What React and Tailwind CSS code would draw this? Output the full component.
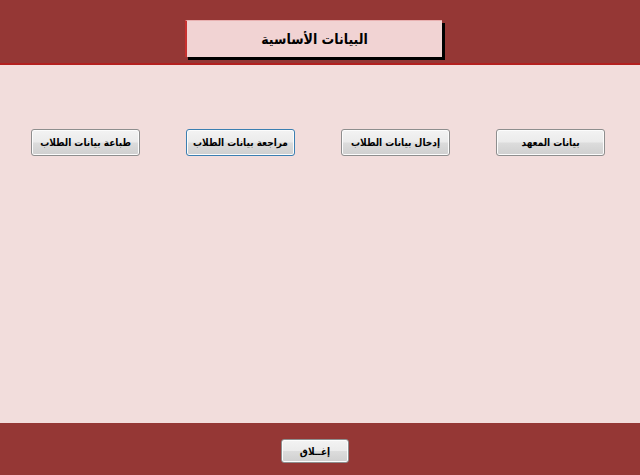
import React from 'react';

const btnSkin =
  "rounded-[3px] border whitespace-nowrap px-0 text-[10px] font-bold text-black bg-[linear-gradient(#f3f3f3_0%,#ebebeb_48%,#dcdcdc_52%,#cfcfcf_100%)] shadow-[inset_0_0_0_1px_#fcfcfc] cursor-pointer";

const buttons = [
  { label: 'بيانات المعهد' },
  { label: 'إدخال بيانات الطلاب' },
  { label: 'مراجعة بيانات الطلاب', focused: true },
  { label: 'طباعة بيانات الطلاب' },
];

const App = () => {
  return (
    <div
      className="flex h-[475px] w-[640px] flex-col overflow-hidden bg-[#f2dddc]"
      style={{ fontFamily: '"DejaVu Sans Condensed", "DejaVu Sans", Tahoma, sans-serif' }}
    >
      <header className="h-[65px] shrink-0 border-b-2 border-[#b3201f] bg-[#953735] pl-[185px] pt-[20px]">
        <div className="flex h-[37px] w-[257px] items-center justify-center border-t border-l-2 border-[#c8302f] border-t-[#e8b0b0] bg-[#f1d3d3] shadow-[3px_3px_0_0_#000]">
          <h1 dir="rtl" className="text-[14px] font-bold text-black">البيانات الأساسية</h1>
        </div>
      </header>

      <main className="flex-1">
        <div dir="rtl" className="flex gap-[46px] pr-[35px] pt-[64px]">
          {buttons.map((b) => (
            <button
              key={b.label}
              className={`h-[27px] w-[109px] ${btnSkin} ${b.focused ? 'border-[#3c7fb1]' : 'border-[#8e8e8e]'}`}
            >
              {b.label}
            </button>
          ))}
        </div>
      </main>

      <footer className="flex h-[52px] shrink-0 bg-[#953735] pl-[281px] pt-[16px]">
        <button dir="rtl" className={`h-[24px] w-[68px] border-[#8e8e8e] ${btnSkin}`}>
          إغــلاق
        </button>
      </footer>
    </div>
  );
};

export default App;
